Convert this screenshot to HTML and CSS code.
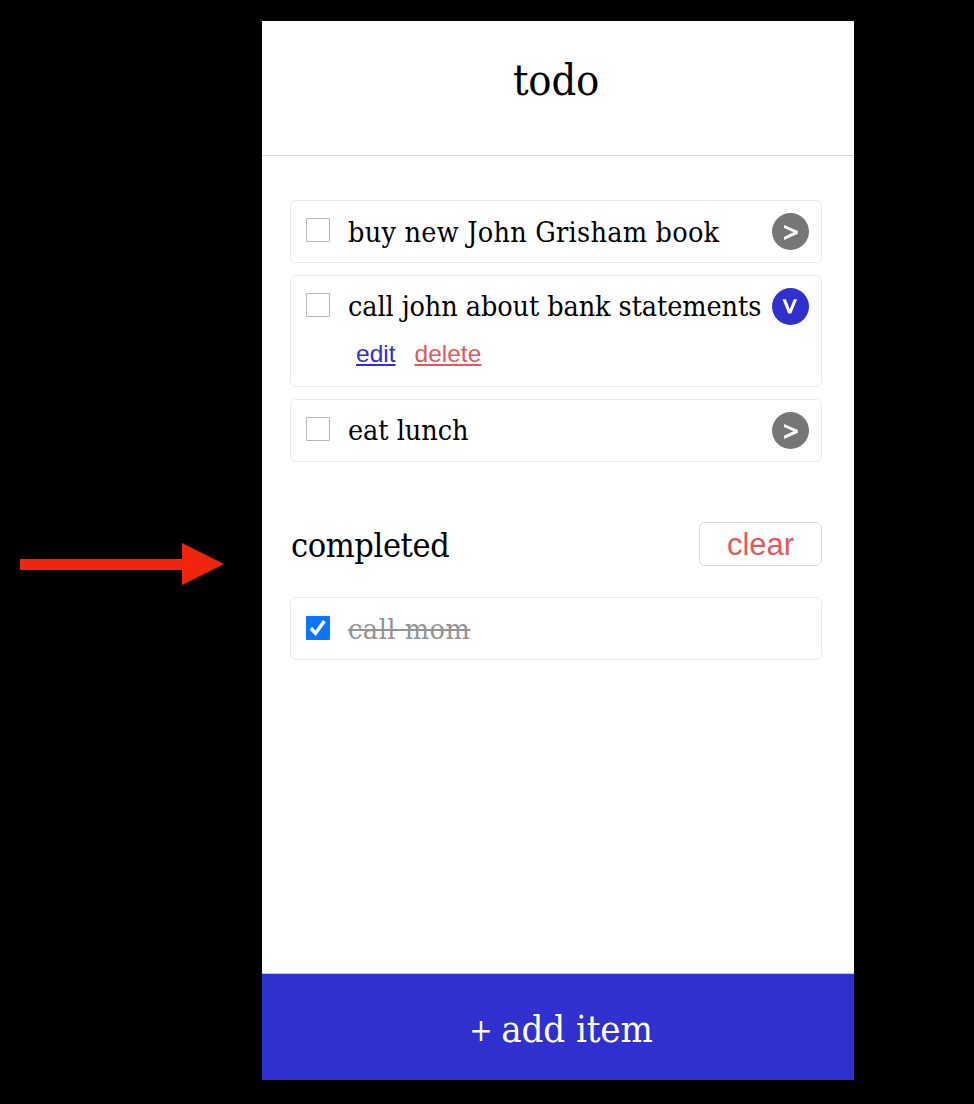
FILE: index.html
```html
<!DOCTYPE html>
<html lang="en">
<head>
<meta charset="utf-8">
<title>todo</title>
<link rel="stylesheet" href="styles.css">
</head>
<body>
<div class="stage">
  <aside class="pointer">
    <svg class="arrow" width="204" height="42" viewBox="0 0 204 42"><path d="M0 16H162V0L204 21 162 42V27H0Z" fill="#f1240e"/></svg>
  </aside>
  <main class="app">
    <header class="header"><h1 class="title"><span class="t-title">todo</span></h1></header>
    <section class="content">
      <ul class="list">
        <li class="card">
          <div class="row">
            <span class="check"></span>
            <span class="label label-first"><span class="t-buy">buy new John Grisham book</span></span>
            <span class="toggle"><svg width="37" height="37" viewBox="0 0 37 37"><path d="M12 12V15L21.5 19.3 12 23.8V27L25.9 20.8V17.9Z" class="chevron"/></svg></span>
          </div>
        </li>
        <li class="card card-open">
          <div class="row">
            <span class="check"></span>
            <span class="label"><span class="t-bank">call john about bank statements</span></span>
            <span class="toggle toggle-open"><svg width="37" height="37" viewBox="0 0 37 37"><path d="M10.5 11.3H13.9L17.8 21 21.8 11.3H25.1L19.3 25.6H16.2Z" class="chevron"/></svg></span>
          </div>
          <div class="actions"><a class="edit">edit</a><a class="delete">delete</a></div>
        </li>
        <li class="card">
          <div class="row">
            <span class="check"></span>
            <span class="label"><span class="t-eat">eat lunch</span></span>
            <span class="toggle"><svg width="37" height="37" viewBox="0 0 37 37"><path d="M12 12V15L21.5 19.3 12 23.8V27L25.9 20.8V17.9Z" class="chevron"/></svg></span>
          </div>
        </li>
      </ul>
      <div class="completed-bar">
        <h2 class="subtitle"><span class="t-completed">completed</span></h2>
        <button class="clear">clear</button>
      </div>
      <ul class="list">
        <li class="card">
          <div class="row">
            <span class="check check-on"><svg width="24" height="24" viewBox="0 0 24 24"><path d="M4.8 12.2L9.6 17.2 18.4 5" fill="none" stroke="#fff" stroke-width="3.6"/></svg></span>
            <span class="label done"><span class="t-mom">call mom</span></span>
          </div>
        </li>
      </ul>
    </section>
    <footer class="footer"><span class="t-add"><span class="plus">+</span> add item</span></footer>
  </main>
</div>
</body>
</html>
```
FILE: styles.css
```css
* { box-sizing: border-box; }
body { margin: 0; background: #000; }
h1, h2, ul { margin: 0; padding: 0; font-weight: 300; list-style: none; }
.stage {
  display: flex;
  height: 1104px;
  padding: 21px 120px 24px 0;
  font-family: "Roboto Slab", "DejaVu Serif Condensed", "DejaVu Serif", serif;
  font-stretch: condensed;
  font-weight: 300;
  color: #000;
}
.pointer { width: 262px; padding: 522px 0 0 20px; }
.arrow { display: block; }
.app { width: 592px; display: flex; flex-direction: column; background: #fff; }
.header { height: 135px; padding: 28px 4px 0 0; border-bottom: 1px solid #d9d9d9; text-align: center; }
.title { font-size: 43px; line-height: 62px; white-space: nowrap; }
.content { flex: 1; padding: 44px 32px 0 28px; }
.list { display: grid; gap: 12px; }
.card { height: 63px; padding: 13px 12px 0 15px; border: 1px solid #e9e9e9; border-radius: 6px; }
.card-open { height: 112px; }
.row { display: flex; align-items: flex-start; height: 37px; }
.check { width: 24px; height: 24px; margin-top: 4px; border: 1px solid #b5b5b5; border-radius: 1px; }
.check-on { margin-top: 5px; border: 0; background: #0a75ff; }
.check-on svg { display: block; }
.label { flex: 1; margin-left: 18px; font-size: 28.5px; line-height: 36px; white-space: nowrap; }
.label-first { line-height: 38px; }
.done { line-height: 38px; color: #949494; text-decoration: line-through; text-decoration-thickness: 2px; }
.toggle { width: 37px; height: 37px; margin-top: -1px; border-radius: 50%; background: #767676; }
.toggle svg { display: block; }
.toggle-open { background: #2f30cd; }
.chevron { fill: #fff; }
.actions { display: flex; gap: 19px; padding: 14px 0 0 50px; font: 24.5px/28px "Liberation Sans", Arial, sans-serif; }
.actions a { text-decoration: underline; text-decoration-thickness: 2px; text-underline-offset: 2px; }
.edit { color: #2f30cd; }
.delete { color: #e05a5b; }
.completed-bar { display: flex; justify-content: space-between; height: 135px; padding-top: 60px; }
.subtitle { padding: 1px 0 0 1px; font-size: 34px; line-height: 44px; white-space: nowrap; }
.clear { width: 123px; height: 44px; padding: 2px 0 0; border: 1px solid #dcdcdc; border-radius: 6px; background: #fff; color: #e05a5b; font: 31px/40px "Liberation Sans", Arial, sans-serif; }
.footer { height: 107px; padding: 31px 0 0 6px; border-top: 1px solid #c6c6f1; background: #2f30cd; color: #fff; text-align: center; font-size: 38px; line-height: 48px; white-space: nowrap; }
.plus { font-size: 31px; letter-spacing: -2px; vertical-align: 1px; line-height: 1; }
.t-add { letter-spacing: -0.1px; }
.t-title { letter-spacing: -0.2px; }
.t-buy { letter-spacing: 0.24px; }
.t-bank { letter-spacing: -0.1px; }
.t-eat { letter-spacing: -0.05px; }
.t-mom { letter-spacing: 0.5px; }
.t-completed { letter-spacing: -0.4px; }
```
